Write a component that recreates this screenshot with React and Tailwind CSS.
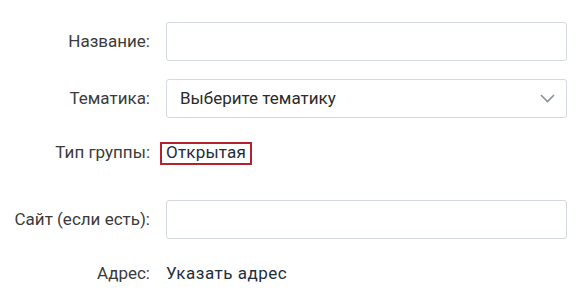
import React from "react";

const Label = ({ children }) => (
  <div className="w-[150px] shrink-0 text-right text-[17px] text-[#3b3b3b]">{children}</div>
);

export default function App() {
  return (
    <div className="w-[580px] h-[306px] bg-white overflow-hidden pt-[22px] font-['Roboto','Liberation_Sans',sans-serif]">
      <div className="flex items-center h-[39px] gap-4">
        <Label>Название:</Label>
        <input className="w-[401px] h-[39px] border border-[#d3d9de] rounded-[3px] bg-white outline-none px-3" />
      </div>

      <div className="flex items-center h-[39px] gap-4 mt-[18px]">
        <Label>Тематика:</Label>
        <div className="w-[401px] h-[39px] border border-[#d3d9de] rounded-[3px] flex items-center justify-between pl-[13px] pr-[11px]">
          <span className="text-[17px] text-[#2b2b2b]">Выберите тематику</span>
          <svg width="15" height="9" viewBox="0 0 15 9" fill="none">
            <path d="M1 1l6.5 6.5L14 1" stroke="#8a929c" strokeWidth="1.6" />
          </svg>
        </div>
      </div>

      <div className="flex items-center h-[22px] gap-[10px] mt-[24px]">
        <Label>Тип группы:</Label>
        <span className="h-[23px] px-[4px] border-2 border-[#b3222f] flex items-center text-[17px] tracking-[0.2px] text-[#1e2d40]">Открытая</span>
      </div>

      <div className="flex items-center h-[39px] gap-4 mt-[36px]">
        <Label>Сайт (если есть):</Label>
        <input className="w-[401px] h-[39px] border border-[#d3d9de] rounded-[3px] bg-white outline-none px-3" />
      </div>

      <div className="flex items-center h-[22px] gap-4 mt-[24px]">
        <Label>Адрес:</Label>
        <span className="text-[17px] tracking-[0.5px] text-[#1e2d40]">Указать адрес</span>
      </div>
    </div>
  );
}
